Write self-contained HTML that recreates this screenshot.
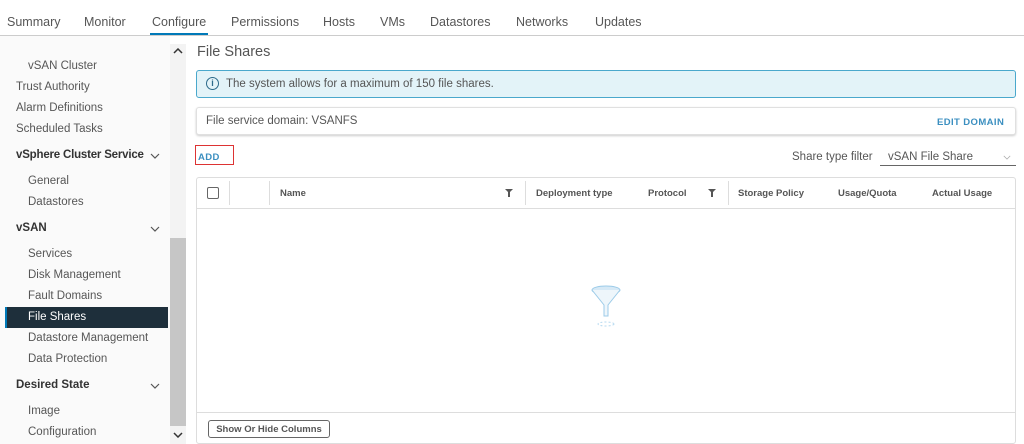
<!DOCTYPE html>
<html><head><style>
*{margin:0;padding:0;box-sizing:border-box}
body{width:1024px;height:444px;overflow:hidden;background:#fff;font-family:"Liberation Sans",sans-serif;color:#565656;position:relative;font-size:12px}
.a{position:absolute;white-space:nowrap}
.s{font-size:11.5px;color:#565656}
.b{font-weight:bold;color:#333;font-size:11.5px}
.h{font-size:9.5px;font-weight:bold;color:#555}
.cv{position:absolute;width:10px;height:6px}
</style></head><body>
<div class="a" style="left:0;top:35px;width:1024px;height:1px;background:#ccc"></div>
<div class="a" style="left:7px;top:15px;font-size:12.5px">Summary</div>
<div class="a" style="left:84px;top:15px;font-size:12.5px">Monitor</div>
<div class="a" style="left:152px;top:15px;font-size:12.5px">Configure</div>
<div class="a" style="left:150px;top:33px;width:58px;height:2px;background:#0079b8"></div>
<div class="a" style="left:231px;top:15px;font-size:12.5px">Permissions</div>
<div class="a" style="left:323px;top:15px;font-size:12.5px">Hosts</div>
<div class="a" style="left:380px;top:15px;font-size:12.5px">VMs</div>
<div class="a" style="left:430px;top:15px;font-size:12.5px">Datastores</div>
<div class="a" style="left:516px;top:15px;font-size:12.5px">Networks</div>
<div class="a" style="left:595px;top:15px;font-size:12.5px">Updates</div>

<div class="a" style="left:0;top:36px;width:170px;height:408px;background:#fafafa"></div>
<div class="a" style="left:170px;top:44px;width:16px;height:400px;background:#f3f3f3"></div>
<div class="a" style="left:170px;top:238px;width:16px;height:188px;background:#c6c6c6"></div>
<svg class="cv" style="left:173px;top:48px" viewBox="0 0 10 6"><path d="M1 5 L5 1 L9 5" fill="none" stroke="#333" stroke-width="1.5"/></svg>
<svg class="cv" style="left:173px;top:432px" viewBox="0 0 10 6"><path d="M1 1 L5 5 L9 1" fill="none" stroke="#333" stroke-width="1.5"/></svg>
<div class="a s" style="left:28px;top:60px">vSAN Cluster</div>
<div class="a s" style="left:16px;top:81px">Trust Authority</div>
<div class="a s" style="left:16px;top:102px">Alarm Definitions</div>
<div class="a s" style="left:16px;top:123px">Scheduled Tasks</div>
<div class="a b" style="left:16px;top:149px;letter-spacing:-.2px">vSphere Cluster Service</div>
<svg class="cv" style="left:150px;top:153px" viewBox="0 0 10 6"><path d="M1 1 L5 5 L9 1" fill="none" stroke="#555" stroke-width="1.2"/></svg>
<div class="a s" style="left:28px;top:175px">General</div>
<div class="a s" style="left:28px;top:196px">Datastores</div>
<div class="a b" style="left:16px;top:222px">vSAN</div>
<svg class="cv" style="left:150px;top:226px" viewBox="0 0 10 6"><path d="M1 1 L5 5 L9 1" fill="none" stroke="#555" stroke-width="1.2"/></svg>
<div class="a s" style="left:28px;top:248px">Services</div>
<div class="a s" style="left:28px;top:269px">Disk Management</div>
<div class="a s" style="left:28px;top:290px">Fault Domains</div>
<div class="a" style="left:5px;top:307px;width:163px;height:21px;background:#1e2f3b;border-left:2px solid #0079b8"></div>
<div class="a s" style="left:28px;top:311px;color:#fff">File Shares</div>
<div class="a s" style="left:28px;top:332px">Datastore Management</div>
<div class="a s" style="left:28px;top:353px">Data Protection</div>
<div class="a b" style="left:16px;top:379px">Desired State</div>
<svg class="cv" style="left:150px;top:383px" viewBox="0 0 10 6"><path d="M1 1 L5 5 L9 1" fill="none" stroke="#555" stroke-width="1.2"/></svg>
<div class="a s" style="left:28px;top:405px">Image</div>
<div class="a s" style="left:28px;top:426px">Configuration</div>

<div class="a" style="left:197px;top:44px;font-size:14.5px;color:#555">File Shares</div>
<div class="a" style="left:196px;top:70px;width:820px;height:28px;background:#e3f3f8;border:1px solid #4aa8cc;border-radius:3px"></div>
<div class="a" style="left:206px;top:77px;width:13px;height:13px;border:1.5px solid #2c6a8a;border-radius:50%;font-size:9px;font-weight:bold;text-align:center;line-height:10px;color:#2c6a8a">i</div>
<div class="a s" style="left:226px;top:78px;color:#555">The system allows for a maximum of 150 file shares.</div>
<div class="a" style="left:196px;top:107px;width:820px;height:28px;background:#fff;border:1px solid #e0e0e0;border-radius:3px;box-shadow:0 1px 2px #ccc"></div>
<div class="a s" style="left:206px;top:115px">File service domain: VSANFS</div>
<div class="a" style="left:937px;top:117px;font-size:9.5px;font-weight:bold;color:#3b8fc0;letter-spacing:.4px">EDIT DOMAIN</div>
<div class="a" style="left:195px;top:145px;width:39px;height:20px;border:1px solid #d33"></div>
<div class="a" style="left:198px;top:152px;font-size:9.5px;font-weight:bold;color:#3b8fc0;letter-spacing:.4px">ADD</div>
<div class="a s" style="left:792px;top:151px">Share type filter</div>
<div class="a s" style="left:888px;top:151px">vSAN File Share</div>
<svg class="cv" style="left:1003px;top:155px;width:8px;height:5px" viewBox="0 0 10 6"><path d="M1 1 L5 5 L9 1" fill="none" stroke="#aaa" stroke-width="1"/></svg>
<div class="a" style="left:880px;top:165px;width:136px;height:1px;background:#666"></div>

<div class="a" style="left:196px;top:177px;width:820px;height:267px;border:1px solid #ddd;border-radius:3px"></div>
<div class="a" style="left:197px;top:208px;width:818px;height:1px;background:#ddd"></div>
<div class="a" style="left:207px;top:187px;width:12px;height:12px;border:1px solid #666;border-radius:2px"></div>
<div class="a" style="left:229px;top:181px;width:1px;height:24px;background:#ddd"></div>
<div class="a" style="left:269px;top:181px;width:1px;height:24px;background:#ddd"></div>
<div class="a" style="left:525px;top:181px;width:1px;height:24px;background:#ddd"></div>
<div class="a" style="left:728px;top:181px;width:1px;height:24px;background:#ddd"></div>
<div class="a h" style="left:280px;top:188px">Name</div>
<svg class="a" style="left:505px;top:189px" width="8" height="8" viewBox="0 0 8 8"><path d="M0 0H8L5 3V8H3V3Z" fill="#555"/></svg>
<div class="a h" style="left:536px;top:188px">Deployment type</div>
<div class="a h" style="left:648px;top:188px">Protocol</div>
<svg class="a" style="left:708px;top:189px" width="8" height="8" viewBox="0 0 8 8"><path d="M0 0H8L5 3V8H3V3Z" fill="#555"/></svg>
<div class="a h" style="left:738px;top:188px">Storage Policy</div>
<div class="a h" style="left:838px;top:188px">Usage/Quota</div>
<div class="a h" style="left:932px;top:188px">Actual Usage</div>
<svg class="a" style="left:586px;top:284px" width="40" height="46" viewBox="0 0 40 46">
<ellipse cx="20" cy="6" rx="14" ry="4" fill="#d6e9f6" stroke="#9ccbe8"/>
<path d="M6 6 L18 21 L18 32 L22 32 L22 21 L34 6" fill="#eef6fb" stroke="#9ccbe8"/>
<ellipse cx="20" cy="40" rx="8" ry="2" fill="none" stroke="#b7daf0" stroke-dasharray="2 2"/>
</svg>
<div class="a" style="left:197px;top:412px;width:818px;height:1px;background:#ddd"></div>
<div class="a" style="left:208px;top:420px;width:122px;height:18px;border:1px solid #666;border-radius:3px;font-size:9.5px;font-weight:bold;color:#555;text-align:center;line-height:17px">Show Or Hide Columns</div>
</body></html>
